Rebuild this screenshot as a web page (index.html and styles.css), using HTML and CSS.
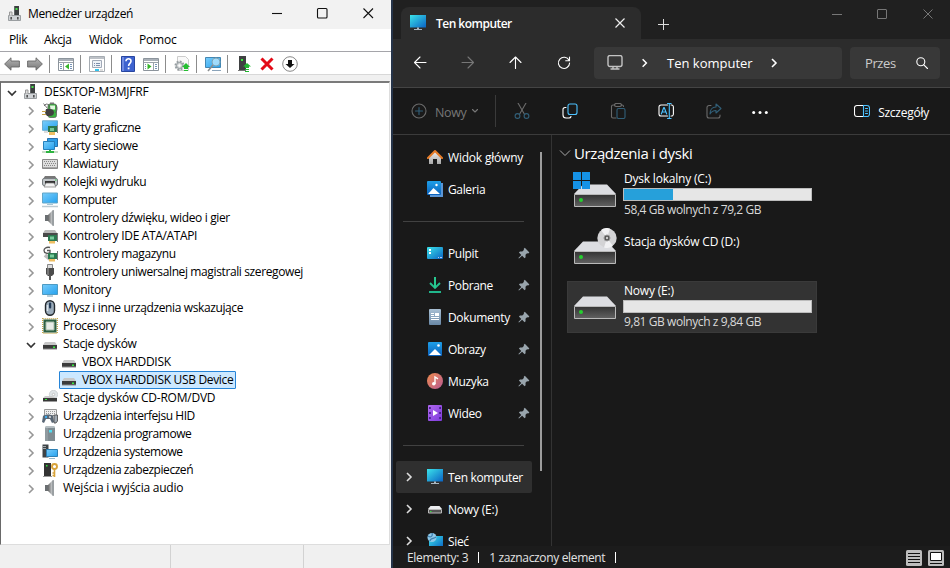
FILE: index.html
```
<!DOCTYPE html>
<html lang="pl">
<head>
<meta charset="utf-8">
<title>Menedżer urządzeń</title>
<link rel="stylesheet" href="styles.css">
</head>
<body>
<svg class="defs" aria-hidden="true">
  <defs>
    <linearGradient id="screen" x1="0" y1="0" x2="1" y2="1"><stop offset="0" stop-color="#3be3ea"/><stop offset="1" stop-color="#0a63c4"/></linearGradient>
    <linearGradient id="mon" x1="0" y1="0" x2="1" y2="1"><stop offset="0" stop-color="#79cdfb"/><stop offset="1" stop-color="#25a1ee"/></linearGradient>
    <linearGradient id="metal" x1="0" y1="0" x2="0" y2="1"><stop offset="0" stop-color="#333"/><stop offset="1" stop-color="#626262"/></linearGradient>
    <linearGradient id="arrow" x1="0" y1="0" x2="0" y2="1"><stop offset="0" stop-color="#b5b5b5"/><stop offset="1" stop-color="#777"/></linearGradient>
    <linearGradient id="speak" x1="0" y1="0" x2="1" y2="0"><stop offset="0" stop-color="#666"/><stop offset="1" stop-color="#c5c8ca"/></linearGradient>
    <linearGradient id="pic" x1="0" y1="0" x2="0" y2="1"><stop offset="0" stop-color="#1e9fe8"/><stop offset="1" stop-color="#0b62bd"/></linearGradient>
    <linearGradient id="music" x1="0" y1="0" x2="1" y2="1"><stop offset="0" stop-color="#ef8b4c"/><stop offset="1" stop-color="#b75a94"/></linearGradient>
    <linearGradient id="house" x1="0" y1="0" x2="0" y2="1"><stop offset="0" stop-color="#f0f0f0"/><stop offset="1" stop-color="#a8a8a8"/></linearGradient>
    <linearGradient id="video" x1="0" y1="0" x2="1" y2="1"><stop offset="0" stop-color="#b068ee"/><stop offset="1" stop-color="#7d3bdc"/></linearGradient>
    <linearGradient id="doc" x1="0" y1="0" x2="0" y2="1"><stop offset="0" stop-color="#a9c0d4"/><stop offset="1" stop-color="#6988a6"/></linearGradient>
  </defs>
  <symbol id="chev" viewBox="0 0 16 16"><path d="M6 4l4 4-4 4" fill="none" stroke="currentColor" stroke-width="1.600"/></symbol>
  <symbol id="chevd" viewBox="0 0 16 16"><path d="M4 6l4 4 4-4" fill="none" stroke="currentColor" stroke-width="1.700"/></symbol>
  <symbol id="devmgr" viewBox="0 0 16 16"><path d="M7 0h5v9H7z" fill="#606465"/><path d="M8 0h4v9H8z" fill="#3c3f40"/><path d="M8.500 2h2v2h-2z" fill="#46e04a"/><path d="M1.500 9.500h12v5h-12z" fill="#cfd2d5" stroke="#9a9ea1"/><path d="M2.500 9.500V6H5v3.500" fill="#ddd" stroke="#999"/><path d="M3.500 11h1.300v2.500H3.500zM10.200 11h1.300v2.500h-1.300z" fill="#333"/></symbol>
  <symbol id="left" viewBox="0 0 16 16"><path d="M.6 8L7 1.800V5h8.400v6H7v3.200z" fill="url(#arrow)" stroke="#666" stroke-width=".9"/></symbol>
  <symbol id="right" viewBox="0 0 16 16"><path d="M15.400 8L9 1.800V5H.600v6H9v3.200z" fill="url(#arrow)" stroke="#666" stroke-width=".9"/></symbol>
  <symbol id="treewin" viewBox="0 0 16 16"><path d="M.5 2.500h15v12H.5z" fill="#fff" stroke="#8c949c"/><path d="M1 3h14v2H1z" fill="#a9b0b8"/><path d="M1 6.500h14" stroke="#9aa2aa"/><path d="M5.500 7v7" stroke="#9aa2aa"/><path d="M2 8.500h2M2 10.500h2M2 12.500h2M12 8.500h2M12 10.500h2M12 12.500h2" stroke="#7794b8"/><path d="M11 7.500v6l-4-3z" fill="#35b52b"/></symbol>
  <symbol id="props" viewBox="0 0 16 16"><path d="M.5.500h15v15H.5z" fill="#fff" stroke="#a6acb2"/><path d="M1 2h14" stroke="#a7adb4" stroke-width="1.500"/><path d="M3.500 4.500h9v7h-9z" fill="#eef2f7" stroke="#a2aab8"/><path d="M5 7.500h1M7 7.500h4M5 9.500h1M7 9.500h4" stroke="#7d8eac"/><path d="M6 14h4" stroke="#2fc5ef" stroke-width="2"/><path d="M11 14h3" stroke="#bbb"/></symbol>
  <symbol id="help" viewBox="0 0 16 16"><path d="M1.500.500h13v15h-13z" fill="#3d62cf" stroke="#2846a0"/><path d="M2 1h2v14H2z" fill="#6f8be2"/><path d="M6 5.300c0-3.500 5.200-3.200 5 0C11 7.400 8.600 7.500 8.600 10" fill="none" stroke="#fff" stroke-width="1.600"/><path d="M7.700 11.500h1.800v1.800H7.700z" fill="#fff"/></symbol>
  <symbol id="actwin" viewBox="0 0 16 16"><path d="M.5 2.500h15v12H.5z" fill="#fff" stroke="#8c949c"/><path d="M1 3h14v2H1z" fill="#a9b0b8"/><path d="M1 6.500h14M10.500 7v7" stroke="#9aa2aa"/><path d="M12 8.500h2M12 10.500h2M12 12.500h2M2 8.500h1M2 10.500h1M2 12.500h1" stroke="#7794b8"/><path d="M4.500 7.500v6l4-3z" fill="#35b52b"/></symbol>
  <symbol id="gear" viewBox="0 0 16 16"><path d="M3.500.500h8l3 3v11h-11z" fill="#f9f9f9" stroke="#ccc"/><circle cx="5.500" cy="9.500" r="4" fill="#ddd" stroke="#959da1" stroke-width="2" stroke-dasharray="1.800 1.300"/><circle cx="5.500" cy="9.500" r="3" fill="#d7dadb" stroke="#959da1"/><circle cx="5.500" cy="9.500" r="1.200" fill="#fff"/><path d="M12 7l4 4h-2v2h-4v-2H8z" fill="#25bf32"/><path d="M10 14.500h4" stroke="#25bf32"/></symbol>
  <symbol id="scan" viewBox="0 0 16 16"><path d="M.5 1.500h15v10H.5z" fill="url(#mon)" stroke="#4487b2"/><circle cx="11" cy="6" r="4" fill="#b7e5fc" fill-opacity=".8" stroke="#7fa3b5"/><path d="M8 9l-5 6" stroke="#8a8e90" stroke-width="1.600"/><path d="M7 14.500h9" stroke="#8ba4ba"/></symbol>
  <symbol id="update" viewBox="0 0 16 16"><path d="M2 0h7v14H2z" fill="#3f4142"/><path d="M1 14h8v1H1z" fill="#777"/><path d="M4 3h2v2H4z" fill="#3aee3f"/><path d="M10 7l4 3.500h-2V12H8v-1.500H6z" fill="#22b832"/><path d="M8 13.500h4M8 15.500h4" stroke="#22b832"/></symbol>
  <symbol id="redx" viewBox="0 0 16 16"><path d="M2.500 2.500l11 11M13.500 2.500l-11 11" stroke="#e30b17" stroke-width="3"/></symbol>
  <symbol id="downc" viewBox="0 0 16 16"><circle cx="8" cy="8" r="7.300" fill="#fff" stroke="#888"/><path d="M6 4h4v4h2.500L8 12 3.500 8H6z" fill="#111"/></symbol>
  <symbol id="battery" viewBox="0 0 16 16"><rect x="6" y="2" width="8.500" height="13.500" rx="2" fill="#39b03e" stroke="#5b665c" stroke-width=".8"/><path d="M8 3.500h5v4H8z" fill="#e1f7df"/><path d="M8 .5h4v1.500H8z" fill="#777"/><path d="M1.500 1.500l4 5M2 4l2-2c3 0 4 2 4 5M14 3c2 3 1 6-1 8" fill="none" stroke="#555" stroke-width=".8"/><path d="M4 7h4c2 0 4 1 4 3.500S10 14 8 14H5l-2-3z" fill="#404040"/><path d="M0 9.500h4M0 12.500h4" stroke="#c5a348"/></symbol>
  <symbol id="gpu" viewBox="0 0 16 16"><path d="M.5.800h15v9.500H.5z" fill="url(#mon)" stroke="#6aacd0"/><path d="M2 12h4" stroke="#bbb"/><path d="M6 6h9v6H6z" fill="#2b7850"/><path d="M8 8h4v3H8z" fill="#74c898"/><path d="M15.500 5v8" stroke="#888"/><path d="M8 12v3M10 12v3M12 12v3" stroke="#e7a320" stroke-width="1.400"/></symbol>
  <symbol id="net" viewBox="0 0 16 16"><path d="M5.500.500h10v8h-10z" fill="#2b9de7" stroke="#2670ac"/><path d="M1.500 3.500h11v8h-11z" fill="url(#mon)" stroke="#2680bc"/><path d="M0 14h16" stroke="#c9ddc9" stroke-width="2"/><path d="M4 14h8M8 12v2" stroke="#2db440" stroke-width="2"/></symbol>
  <symbol id="kbd" viewBox="0 0 16 16"><path d="M.5 3.500h15v9H.5z" fill="#dedede" stroke="#888"/><path d="M2 5.500h12M3 7.500h11M2 9.500h12" stroke="#888" stroke-dasharray="1 1"/><path d="M1 11.700h14" stroke="#999"/></symbol>
  <symbol id="printer" viewBox="0 0 16 16"><path d="M3 2h10l2 3H1z" fill="#777"/><rect x=".5" y="4.500" width="15" height="7" rx="1.500" fill="#bfc4c7" stroke="#787e81"/><path d="M3 7h10v3H3z" fill="#333"/><path d="M4 9h8l2 4H2z" fill="#f2f2f2" stroke="#777" stroke-width=".7"/><path d="M13 5.500h1.500v1H13z" fill="#39cd4c"/></symbol>
  <symbol id="pc" viewBox="0 0 16 16"><path d="M.5 1h15v10H.5z" fill="url(#mon)" stroke="#62a6c8"/><path d="M5 12.500h6" stroke="#a7c4d2"/><path d="M0 14.500h16" stroke="#bccbd2" stroke-width="1.500"/></symbol>
  <symbol id="speaker" viewBox="0 0 16 16"><path d="M3 5h3v6H3z" fill="#6b6f72"/><path d="M6 5l4-4v14l-4-4z" fill="url(#speak)"/><path d="M10 .5l2-.5v16l-2-.5z" fill="#9a9fa2"/></symbol>
  <symbol id="ide" viewBox="0 0 16 16"><path d="M3 2h10l2 3H1z" fill="#b9b9b9"/><path d="M1 5h14v4H1z" fill="#4a4a4a"/><path d="M6 7h9v6H6z" fill="#2b7850"/><path d="M8 8.500h4v3H8z" fill="#77cc9b"/><path d="M15.500 5v9" stroke="#777"/><path d="M8 13v2.500M10 13v2.500M12 13v2.500" stroke="#e7a320" stroke-width="1.400"/></symbol>
  <symbol id="storage" viewBox="0 0 16 16"><path d="M3 9l5 4" stroke="#bbb" stroke-width="4"/><path d="M8 1.500C4 .5 2 3 2 4.500c0 3 4 3.500 6 2V4.500H5" fill="none" stroke="#555" stroke-width="1.300"/><path d="M6 7h9v6H6z" fill="#2b7850"/><path d="M8 8.500h4v3H8z" fill="#77cc9b"/><path d="M15.500 5v9" stroke="#777"/><path d="M8 13v2.500M10 13v2.500M12 13v2.500" stroke="#e7a320" stroke-width="1.400"/></symbol>
  <symbol id="usb" viewBox="0 0 16 16"><path d="M5.500.500h5V5h-5z" fill="#ddd" stroke="#888"/><path d="M4 4h8v6l-2 2H6l-2-2z" fill="#4b4b4b"/><path d="M5 4h2v7H5z" fill="#777"/><path d="M7 11h2v5H7z" fill="#555"/></symbol>
  <symbol id="monitor" viewBox="0 0 16 16"><path d="M.5 2.500h15v10H.5z" fill="url(#mon)" stroke="#4e9bc3"/><path d="M5 14h6" stroke="#9abacb" stroke-width="1.400"/></symbol>
  <symbol id="mouse" viewBox="0 0 16 16"><rect x="3.500" y=".7" width="9" height="14.600" rx="4.500" fill="#9aabba" stroke="#23282d" stroke-width="1.400"/><path d="M5.500 5v6" stroke="#dae4ec" stroke-width="1.500"/><rect x="7" y="2.500" width="2.200" height="6" rx="1" fill="#243c58"/></symbol>
  <symbol id="cpu" viewBox="0 0 16 16"><path d="M.7.700h14.600v14.600H.7z" fill="none" stroke="#c2a54b" stroke-width="1.400" stroke-dasharray="1 1"/><path d="M1.500 1.500h13v13h-13z" fill="#2c6044"/><path d="M4 4h8v8H4z" fill="#e7ece7" stroke="#a5bba9"/></symbol>
  <symbol id="disk" viewBox="0 0 16 16"><path d="M3 6h10l2 3H1z" fill="#c8c8c8"/><path d="M1 9h14v4H1z" fill="#3b3b3b"/><path d="M1 13h14" stroke="#888"/><path d="M11 10.500h2V12h-2z" fill="#36ec3d"/></symbol>
  <symbol id="cdd" viewBox="0 0 16 16"><circle cx="11.500" cy="4.500" r="4.200" fill="#dfe4e7" stroke="#c5cacd" stroke-width=".7"/><circle cx="11.500" cy="4.500" r="1.200" fill="#fff" stroke="#aaa" stroke-width=".6"/><path d="M3 6h7l4 2H1z" fill="#ccc"/><path d="M1 8h14v3.500H1z" fill="#383838"/><path d="M3 9h2v1H3z" fill="#36ec3d"/></symbol>
  <symbol id="hid" viewBox="0 0 16 16"><path d="M2.500 1.500h12v6h-12z" fill="#eee" stroke="#999"/><path d="M4 3.500h9M4 5.500h9" stroke="#999" stroke-dasharray="1 1"/><path d="M1 8c2-2 8-2 10 0l1 6-2 1-2-4H4l-2 4-2-1z" fill="#586675"/><path d="M12 7h3.500v6l-1.500 2h-2z" fill="#a0a9b2" stroke="#444" stroke-width=".8"/><circle cx="4" cy="9" r="1.200" fill="#3facec"/><circle cx="8" cy="9" r="1" fill="#ddd"/></symbol>
  <symbol id="soft" viewBox="0 0 16 16"><path d="M4 0h8l1 2v13H3V2z" fill="#7f8b91"/><path d="M4 0h8l1 2H3z" fill="#b5bec2"/><path d="M3 2h3v13H3z" fill="#8f9a9f"/><path d="M7 4h3v2.500H7z" fill="#52dbf0"/></symbol>
  <symbol id="sys" viewBox="0 0 16 16"><path d="M.5.500h6v13h-6z" fill="#3d4346"/><path d="M1 2.500h3M1 4.500h3" stroke="#a0a7ab"/><path d="M4.500 5.500h11v7h-11z" fill="url(#mon)" stroke="#2e7fb2"/><path d="M7 14.500h6" stroke="#95b7ca"/></symbol>
  <symbol id="sec" viewBox="0 0 16 16"><path d="M2 1h7v13H2z" fill="#333"/><path d="M4 3h1.500v1.500H4z" fill="#2fe83e"/><path d="M1 14.500h9" stroke="#999"/><circle cx="12.500" cy="4.500" r="2.500" fill="none" stroke="#d8a33a" stroke-width="1.900"/><path d="M12.500 7v8M12.500 11h-2M12.500 13.500h-2" stroke="#d8a33a" stroke-width="1.600"/></symbol>

  <symbol id="screenpc" viewBox="0 0 16 16"><path d="M0 0h16v12.500H0z" fill="url(#screen)"/><path d="M7 12.500h2V14h3v1H4v-1h3z" fill="#aab6bf"/></symbol>
  <symbol id="home" viewBox="0 0 16 16"><path d="M2 8l6-6 6 6v7h-4v-5H6v5H2z" fill="url(#house)"/><path d="M1 9l7-7 7 7" fill="none" stroke="#e57b28" stroke-width="2.100" stroke-linecap="round" stroke-linejoin="round"/></symbol>
  <symbol id="gallery" viewBox="0 0 16 16"><path d="M4 2h12v14H3v-3z" fill="#5b96d6"/><rect width="14" height="14" rx="1" fill="url(#pic)"/><path d="M1 13l5.500-6 6.500 6z" fill="#fff"/><circle cx="9.500" cy="4" r="1.200" fill="#fff"/></symbol>
  <symbol id="desktop" viewBox="0 0 16 16"><rect y="2" width="16" height="12" rx="1" fill="url(#screen)"/><path d="M2 4h2v2H2zM2 7h2v2H2z" fill="#fff"/><path d="M11 12.500h1M13 12.500h2" stroke="#bce"/></symbol>
  <symbol id="dl" viewBox="0 0 16 16"><path d="M3 6l5 5 5-5" fill="none" stroke="#24c08d" stroke-width="1.900"/><path d="M7 0h2v11H7z" fill="#27c990"/><path d="M2 14h12v2H2z" fill="#20b68b"/></symbol>
  <symbol id="docs" viewBox="0 0 16 16"><rect x="2" width="12" height="16" rx="1" fill="url(#doc)"/><path d="M4 4.500h3M4 6.500h3M4 8.500h8M4 10.500h8" stroke="#fff"/><path d="M8 4h4v3H8z" fill="#fff"/></symbol>
  <symbol id="images" viewBox="0 0 16 16"><rect x="1" y="1" width="14" height="14" rx="1" fill="url(#pic)"/><path d="M2 14l6-6 6 6z" fill="#fff"/><circle cx="11.500" cy="4.500" r="1.300" fill="#fff"/></symbol>
  <symbol id="musicicon" viewBox="0 0 16 16"><circle cx="8" cy="8" r="8" fill="url(#music)"/><circle cx="6.800" cy="10.800" r="1.800" fill="#fff"/><path d="M8 11V4l3 1.800" fill="none" stroke="#fff" stroke-width="1.400"/></symbol>
  <symbol id="vid" viewBox="0 0 16 16"><rect x="1" width="14" height="16" rx="1" fill="url(#video)"/><path d="M2.900 2v12M13.100 2v12" stroke="#46218a" stroke-width="1.800" stroke-dasharray="2 3"/><path d="M6 5l5 3-5 3z" fill="#fff"/></symbol>
  <symbol id="drive" viewBox="0 0 16 16"><path d="M3.500 5h9L15 8H1z" fill="#eceef0"/><path d="M1.500 8.500h13v3.500h-13z" fill="#555" stroke="#bbb"/><path d="M3 10h1.500v1H3z" fill="#35e03e"/></symbol>
  <symbol id="network" viewBox="0 0 16 16"><path d="M2 3h14v12H2z" fill="url(#screen)"/><circle cx="5" cy="4.500" r="4.500" fill="#8fc8e8"/><path d="M1 3c3 2 5 0 4-3M3 8c0-3 4-2 6-4" fill="none" stroke="#3f81b0" stroke-width="1.300"/></symbol>
  <symbol id="pin" viewBox="0 0 12 12"><path d="M6.800.8l4.600 4.600-1.200 1-1.200-.2-1.500 1.600.1 2.400-1 1.100-2.500-2.500L1 11.600l-.6-.6 2.900-3.100L.9 5.500l1.100-1 2.300.1L5.900 3l-.1-1.200z" fill="#99a5ad"/></symbol>
  <symbol id="bigdrive" viewBox="0 0 44 24"><path d="M10 .5h24l9 9.500H1z" fill="#dcdde1"/><path d="M1.500 10.500h41v12h-41z" fill="url(#metal)" stroke="#b9b9b9"/><circle cx="8" cy="16" r="2" fill="#25cf2f"/></symbol>
</svg>

<div class="desktop">
  <section class="devmgr">
    <header class="title">
      <svg class="i16 ti"><use href="#devmgr"/></svg><span class="name">Menedżer urządzeń</span>
      <svg class="caption" viewBox="0 0 102 12"><g fill="none" stroke="#111" stroke-width="1.100"><path d="M0 6.500h10"/><rect x="45.500" y="1.500" width="9.500" height="9.500" rx="1"/><path d="M91.500 1.500l9.500 9.500M101 1.500L91.500 11"/></g></svg>
    </header>
    <nav class="menu"><span>Plik</span><span>Akcja</span><span>Widok</span><span>Pomoc</span></nav>
    <div class="tools">
      <svg class="i16"><use href="#left"/></svg><svg class="i16 nx"><use href="#right"/></svg><i></i>
      <svg class="i16"><use href="#treewin"/></svg><i></i>
      <svg class="i16"><use href="#props"/></svg><i></i>
      <svg class="i16"><use href="#help"/></svg><svg class="i16 nx"><use href="#actwin"/></svg><i></i>
      <svg class="i16"><use href="#gear"/></svg><i></i>
      <svg class="i16"><use href="#scan"/></svg><i></i>
      <svg class="i16 up"><use href="#update"/></svg><svg class="i16 x"><use href="#redx"/></svg><svg class="i16 dn"><use href="#downc"/></svg>
    </div>
    <div class="tree">
      <div class="row root"><svg class="i16 ch open"><use href="#chevd"/></svg><svg class="i16"><use href="#devmgr"/></svg><span class="caps">DESKTOP-M3MJFRF</span></div>
      <div class="row"><svg class="i16 ch"><use href="#chev"/></svg><svg class="i16"><use href="#battery"/></svg><span>Baterie</span></div>
      <div class="row"><svg class="i16 ch"><use href="#chev"/></svg><svg class="i16"><use href="#gpu"/></svg><span>Karty graficzne</span></div>
      <div class="row"><svg class="i16 ch"><use href="#chev"/></svg><svg class="i16"><use href="#net"/></svg><span>Karty sieciowe</span></div>
      <div class="row"><svg class="i16 ch"><use href="#chev"/></svg><svg class="i16"><use href="#kbd"/></svg><span>Klawiatury</span></div>
      <div class="row"><svg class="i16 ch"><use href="#chev"/></svg><svg class="i16"><use href="#printer"/></svg><span>Kolejki wydruku</span></div>
      <div class="row"><svg class="i16 ch"><use href="#chev"/></svg><svg class="i16"><use href="#pc"/></svg><span>Komputer</span></div>
      <div class="row"><svg class="i16 ch"><use href="#chev"/></svg><svg class="i16"><use href="#speaker"/></svg><span>Kontrolery dźwięku, wideo i gier</span></div>
      <div class="row"><svg class="i16 ch"><use href="#chev"/></svg><svg class="i16"><use href="#ide"/></svg><span>Kontrolery IDE ATA/ATAPI</span></div>
      <div class="row"><svg class="i16 ch"><use href="#chev"/></svg><svg class="i16"><use href="#storage"/></svg><span>Kontrolery magazynu</span></div>
      <div class="row"><svg class="i16 ch"><use href="#chev"/></svg><svg class="i16"><use href="#usb"/></svg><span class="long">Kontrolery uniwersalnej magistrali szeregowej</span></div>
      <div class="row"><svg class="i16 ch"><use href="#chev"/></svg><svg class="i16"><use href="#monitor"/></svg><span>Monitory</span></div>
      <div class="row"><svg class="i16 ch"><use href="#chev"/></svg><svg class="i16"><use href="#mouse"/></svg><span class="long">Mysz i inne urządzenia wskazujące</span></div>
      <div class="row"><svg class="i16 ch"><use href="#chev"/></svg><svg class="i16"><use href="#cpu"/></svg><span>Procesory</span></div>
      <div class="row"><svg class="i16 ch open"><use href="#chevd"/></svg><svg class="i16"><use href="#disk"/></svg><span>Stacje dysków</span></div>
      <div class="row child"><svg class="i16"><use href="#disk"/></svg><span class="caps">VBOX HARDDISK</span></div>
      <div class="row child sel"><svg class="i16"><use href="#disk"/></svg><span class="caps">VBOX HARDDISK USB Device</span></div>
      <div class="row"><svg class="i16 ch"><use href="#chev"/></svg><svg class="i16"><use href="#cdd"/></svg><span class="caps">Stacje dysków CD-ROM/DVD</span></div>
      <div class="row"><svg class="i16 ch"><use href="#chev"/></svg><svg class="i16"><use href="#hid"/></svg><span class="tight">Urządzenia interfejsu HID</span></div>
      <div class="row"><svg class="i16 ch"><use href="#chev"/></svg><svg class="i16"><use href="#soft"/></svg><span class="tight">Urządzenia programowe</span></div>
      <div class="row"><svg class="i16 ch"><use href="#chev"/></svg><svg class="i16"><use href="#sys"/></svg><span class="tight">Urządzenia systemowe</span></div>
      <div class="row"><svg class="i16 ch"><use href="#chev"/></svg><svg class="i16"><use href="#sec"/></svg><span class="tight">Urządzenia zabezpieczeń</span></div>
      <div class="row"><svg class="i16 ch"><use href="#chev"/></svg><svg class="i16"><use href="#speaker"/></svg><span class="caps">Wejścia i wyjścia audio</span></div>
    </div>
    <footer class="status"><i></i><i></i></footer>
  </section>

  <section class="explorer">
    <header class="tabs">
      <div class="tab"><svg class="i16"><use href="#screenpc"/></svg><b>Ten komputer</b><svg class="tx" viewBox="0 0 10 10"><path d="M.5.500l9 9M9.500.500l-9 9" stroke="#eee" stroke-width="1.200"/></svg></div>
      <svg class="plus" viewBox="0 0 12 12"><path d="M6.500 1v11M1 6.500h11" stroke="#ddd"/></svg>
      <svg class="caption dark" viewBox="0 0 102 12"><g fill="none" stroke="#777"><path d="M0 6.500h10"/><rect x="45.500" y="1.500" width="9" height="9" rx=".5"/><path d="M91.500 1.500l9 9M100.500 1.500l-9 9"/></g></svg>
    </header>
    <div class="nav">
      <svg class="i16" viewBox="0 0 16 16"><path d="M14 7.500H2.500M8 2L2.500 7.500 8 13" class="ln"/></svg>
      <svg class="i16 dim" viewBox="0 0 16 16"><path d="M2 7.500h11.500M8 2l5.500 5.500L8 13" class="ln"/></svg>
      <svg class="i16" viewBox="0 0 16 16"><path d="M7.500 13.500V2M2 7.500L7.500 2 13 7.500" class="ln"/></svg>
      <svg class="i16" viewBox="0 0 16 16"><path d="M13 5.300A5.600 5.600 0 1 0 13.600 8M13.500 2v3.800H9.700" class="ln"/></svg>
      <div class="addr"><svg class="i16" viewBox="0 0 16 16"><rect x="1" y=".5" width="14" height="11" rx="2" class="ln soft"/><path d="M6 12v2M10 12v2M4 14h8" class="ln soft"/></svg><svg class="i16 c1"><use href="#chev"/></svg><span>Ten komputer</span><svg class="i16 c2"><use href="#chev"/></svg></div>
      <div class="search"><span>Przes</span><svg viewBox="0 0 12 12"><circle cx="4.800" cy="4.800" r="4" class="ln"/><path d="M7.800 7.800l3.700 3.700" class="ln"/></svg></div>
    </div>
    <div class="cmd">
      <svg class="i16 off" viewBox="0 0 16 16"><circle cx="8" cy="8" r="7" class="ln"/><path d="M8 4.500v7M4.500 8h7" class="ln bl"/></svg>
      <span class="new">Nowy</span><svg class="cd" viewBox="0 0 8 6"><path d="M1.500 1.500L4 4l2.500-2.500" class="ln"/></svg><i></i>
      <svg class="i16 off" viewBox="0 0 16 16"><path d="M4 0l6.300 11M12 0L5.700 11" class="ln"/><circle cx="3.500" cy="13" r="2.400" class="ln bl"/><circle cx="12.500" cy="13" r="2.400" class="ln bl"/></svg>
      <svg class="i16" viewBox="0 0 16 16"><path d="M4 4.500H3A2 2 0 0 0 1 6.500V12a3 3 0 0 0 3 3h3a2 2 0 0 0 2-1.500" class="ln"/><rect x="6" y="1" width="9" height="10.500" rx="2" class="ln bl"/></svg>
      <svg class="i16 off" viewBox="0 0 16 16"><path d="M5 2H3a1.500 1.500 0 0 0-1.500 1.500v10A1.500 1.500 0 0 0 3 15h3M11 2h1a1.500 1.500 0 0 1 1.500 1.500" class="ln"/><rect x="4.500" y=".5" width="7" height="3" rx="1.500" class="ln"/><rect x="7" y="5.500" width="8" height="10" rx="1.500" class="ln bl"/></svg>
      <svg class="i16" viewBox="0 0 16 16"><path d="M9.500 2H3a2 2 0 0 0-2 2v7a2 2 0 0 0 2 2h6.500M13 2a2 2 0 0 1 2.400 2v7a2 2 0 0 1-2.400 2" class="ln"/><path d="M11.300 0v15.500M9.500.5h3.600M9.500 15.500h3.600M3.300 11l2.500-6.500h.4L8.700 11M4.200 9h3.600" class="ln bl"/></svg>
      <svg class="i16 off" viewBox="0 0 16 16"><path d="M5 2.500H3A2 2 0 0 0 1 4.500V13a2 2 0 0 0 2 2h9a2 2 0 0 0 2-2v-1" class="ln"/><path d="M10 1l5 4.500-5 4.500V7.500C7 7.500 5.500 8.500 4 11c0-4 2-7 6-7z" class="ln bl"/></svg>
      <svg class="i16 dots" viewBox="0 0 16 16"><g fill="#fff"><circle cx="1.700" cy="9.500" r="1.500"/><circle cx="8" cy="9.500" r="1.500"/><circle cx="14.300" cy="9.500" r="1.500"/></g></svg>
      <svg class="i16 det" viewBox="0 0 16 16"><path d="M9 2.500H3a2.500 2.500 0 0 0-2.500 2.500v6A2.500 2.500 0 0 0 3 13.500h6" class="ln"/><path d="M9.500 2.500H13A2.500 2.500 0 0 1 15.500 5v6a2.500 2.500 0 0 1-2.500 2.500H9.500zM11.500 5.500h2M11.500 8h2M11.500 10.500h2" class="ln bl"/></svg>
      <span class="dt">Szczegóły</span>
    </div>
    <div class="body">
      <aside>
        <div class="list">
          <div class="it"><svg class="i16"><use href="#home"/></svg><span class="wide">Widok główny</span></div>
          <div class="it"><svg class="i16"><use href="#gallery"/></svg><span>Galeria</span></div>
          <hr>
          <div class="it"><svg class="i16"><use href="#desktop"/></svg><span>Pulpit</span><svg class="pin"><use href="#pin"/></svg></div>
          <div class="it"><svg class="i16"><use href="#dl"/></svg><span>Pobrane</span><svg class="pin"><use href="#pin"/></svg></div>
          <div class="it"><svg class="i16"><use href="#docs"/></svg><span>Dokumenty</span><svg class="pin"><use href="#pin"/></svg></div>
          <div class="it"><svg class="i16"><use href="#images"/></svg><span>Obrazy</span><svg class="pin"><use href="#pin"/></svg></div>
          <div class="it"><svg class="i16"><use href="#musicicon"/></svg><span>Muzyka</span><svg class="pin"><use href="#pin"/></svg></div>
          <div class="it"><svg class="i16"><use href="#vid"/></svg><span>Wideo</span><svg class="pin"><use href="#pin"/></svg></div>
          <hr>
          <div class="it node on"><svg class="i16 ex"><use href="#chev"/></svg><svg class="i16"><use href="#screenpc"/></svg><span>Ten komputer</span></div>
          <div class="it node"><svg class="i16 ex"><use href="#chev"/></svg><svg class="i16"><use href="#drive"/></svg><span class="wide">Nowy (E:)</span></div>
          <div class="it node"><svg class="i16 ex"><use href="#chev"/></svg><svg class="i16"><use href="#network"/></svg><span>Sieć</span></div>
        </div>
        <div class="scroll"></div>
      </aside>
      <main>
        <h2><svg viewBox="0 0 12 8"><path d="M1 1.500l5 5 5-5" fill="none" stroke="#aaa"/></svg>Urządzenia i dyski</h2>
        <div class="drv c">
          <svg class="pic" viewBox="0 0 46 38"><svg x="1" y="12" width="44" height="24"><use href="#bigdrive"/></svg><path d="M1 0h8v8H1zM10 0h8v8h-8zM1 9h8v8H1zM10 9h8v8h-8z" fill="#1592e6"/></svg>
          <div class="info"><span class="wide">Dysk lokalny (C:)</span><div class="bar"><div class="fill"></div></div><span class="sub">58,4 GB wolnych z 79,2 GB</span></div>
        </div>
        <div class="drv d">
          <svg class="pic" viewBox="0 0 46 38"><svg x="1" y="13" width="44" height="24"><use href="#bigdrive"/></svg><circle cx="35" cy="10" r="9.700" fill="#d3d3d5"/><path d="M35 10L29 2a10 10 0 0 1 9-1.500zM35 10l6 8a10 10 0 0 1-9 1.500z" fill="#f1f1f3"/><circle cx="35" cy="10" r="3" fill="#555" stroke="#999"/><circle cx="35" cy="10" r="1.200" fill="#ccc"/></svg>
          <div class="info"><span class="wide">Stacja dysków CD (D:)</span></div>
        </div>
        <div class="drv e">
          <svg class="pic" viewBox="0 0 46 38"><svg x="1" y="14" width="44" height="24"><use href="#bigdrive"/></svg></svg>
          <div class="info"><span class="wide">Nowy (E:)</span><div class="bar"></div><span class="sub">9,81 GB wolnych z 9,84 GB</span></div>
        </div>
      </main>
    </div>
    <footer class="foot"><span>Elementy: 3</span><i></i><span>1 zaznaczony element</span><i></i>
      <svg class="i16 v1" viewBox="0 0 16 16"><rect width="16" height="16" rx="1.500" fill="#bdbdbd"/><path d="M2 3.500h12M2 6.500h12M2 9.500h12M2 12.500h12" stroke="#111"/></svg>
      <svg class="i16 v2" viewBox="0 0 16 16"><rect width="16" height="16" rx="1.500" fill="#bdbdbd"/><path d="M2.500 2.500h11v8h-11z" fill="#fff" stroke="#111"/><path d="M2 13.500h12" stroke="#111"/></svg>
    </footer>
  </section>
</div>
</body>
</html>
```
FILE: styles.css
```
* { box-sizing: border-box; }
body { margin: 0; width: 950px; height: 568px; overflow: hidden; font: 12px/18px "Open Sans", "Noto Sans", sans-serif; letter-spacing: -0.35px; }
.defs { position: absolute; width: 0; height: 0; }
.i16 { width: 16px; height: 16px; flex: none; }
span, b { white-space: nowrap; }
.desktop { display: flex; height: 568px; background: #263449; }

.devmgr { width: 391px; display: flex; flex-direction: column; background: #f0f0f0; color: #000; }
.title { height: 29px; background: #f2f2f2; display: flex; align-items: center; padding: 0 17px 0 7px; }
.title .ti { margin-top: -2px; }
.title .name { margin-left: 5px; margin-top: -1px; letter-spacing: -0.35px; }
.caption { width: 102px; height: 12px; margin-left: auto; margin-top: -3px; }
.menu { height: 22px; background: #fff; display: flex; padding: 2px 0 0 9px; }
.menu span:nth-child(1) { width: 35px; }
.menu span:nth-child(2) { width: 45px; }
.menu span:nth-child(3) { width: 50px; }
.menu span:nth-child(4) { letter-spacing: -0.2px; }
.tools { height: 24px; border-top: 1px solid #a5a5aa; border-bottom: 1px solid #d8d8d8; background: #fff; display: flex; align-items: center; padding: 2px 0 0 4px; }
.tools i { width: 1px; height: 18px; background: #8c8c8c; margin: 0 8px 0 6px; }
.tools .nx { margin-left: 7px; }
.tools .up { margin-left: 1px; }
.tools .x { margin-left: 6px; }
.tools .dn { margin-left: 7px; }
.tree { margin-top: 6px; height: 464px; background: #fff; border: 1px solid #696969; border-top: 2px solid #7a7a7a; border-right-color: #ddd; border-bottom-color: #ddd; width: 390px; }
.row { display: flex; align-items: center; height: 18px; padding-left: 22px; }
.row .ch { color: #979797; margin: 2px 3px 0 0; }
.row .ch.open { color: #333; }
.row span { margin-left: 5px; }
.row .caps { letter-spacing: -0.23px; }
.row .long { letter-spacing: -0.38px; }
.row .tight { letter-spacing: -0.45px; }
.root { padding-left: 3px; }
.row.child { margin-left: 58px; padding-left: 2px; width: max-content; padding-right: 3px; }
.row.child .caps { letter-spacing: -0.32px; }
.row.sel { background: #cce8ff; outline: 1px solid #2584d8; outline-offset: -1px; border-radius: 1px; }
.status { height: 23px; display: flex; }
.status i { width: 171px; border-right: 1px solid #d2d2d2; }
.status i + i { width: 133px; }

.explorer { margin-left: 2px; width: 557px; background: #191919; color: #fff; display: flex; flex-direction: column; }
.ln { fill: none; stroke: currentColor; stroke-width: 1.1; stroke-linecap: round; stroke-linejoin: round; }
.ln.soft { stroke: #c4c4c4; stroke-width: 1.4; }
.bl { stroke: #4cc2ff; }
.tabs { height: 39px; background: #202020; display: flex; align-items: center; padding: 0 16px 0 8px; }
.tab { width: 240px; height: 32px; margin-top: 7px; background: #2c2c2c; border-radius: 8px 8px 0 0; display: flex; align-items: center; padding: 0 16px 0 9px; }
.tab b { margin-left: 10px; margin-top: 2px; font-weight: 600; letter-spacing: -0.52px; }
.tx { width: 10px; height: 10px; margin-left: auto; }
.plus { width: 12px; height: 12px; margin: 8px 0 0 16px; }
.caption.dark { margin-top: -11px; }
.nav { height: 49px; background: #2c2c2c; border-bottom: 1px solid #444; display: flex; align-items: center; padding-left: 19px; gap: 32px; }
.nav .dim { color: #777; }
.addr { width: 248px; height: 32px; margin-left: -10px; background: #383838; border-radius: 4px; display: flex; align-items: center; padding-left: 13px; font-size: 13px; letter-spacing: 0; }
.addr .c1 { margin-left: 14px; width: 15px; }
.addr span { margin-left: 15px; }
.addr .c2 { margin-left: 13px; }
.search { width: 90px; height: 32px; margin-left: -24px; background: #383838; border-radius: 4px; display: flex; align-items: center; padding-left: 15px; color: #ccc; font-size: 13px; letter-spacing: -.4px; }
.search span { width: 31px; }
.search svg { width: 12px; height: 12px; margin-left: 20px; color: #fff; }
.cmd { height: 47px; border-bottom: 1px solid #3b3b3b; display: flex; align-items: center; padding: 0 21px 0 18px; }
.cmd .off { color: #6b6b6b; }
.cmd .off .bl { stroke: #315f78; }
.cmd .new { width: 31px; margin: 3px 0 0 8px; color: #777; font-size: 12.5px; }
.cmd .cd { width: 8px; height: 6px; margin-left: 5px; color: #777; }
.cmd .dt { margin-top: 3px; letter-spacing: -.25px; }
.cmd i { width: 1px; height: 32px; background: #3a3a3a; margin: 0 18px 0 16px; }
.cmd i ~ .i16 { margin-right: 32px; }
.cmd i ~ .dots { margin-left: -2px; }
.cmd i ~ .det { margin-left: auto; margin-right: 8px; }
.body { height: 411px; display: flex; overflow: hidden; }
aside { width: 159px; border-right: 1px solid #333; display: flex; padding-top: 6px; }
.list { width: 139px; padding-left: 3px; }
.it { height: 32px; display: flex; align-items: center; padding-left: 31px; }
.it span { margin-left: 5px; margin-top: 1px; }
.it .wide, .info .wide { letter-spacing: -.2px; }
.it .pin { width: 12px; height: 12px; margin-left: auto; margin-right: 2px; flex: none; }
.list hr { border: 0; height: 1px; background: #414141; margin: 16px 8px 15px 7px; }
.node { padding-left: 5px; }
.node .ex { margin-right: 10px; color: #ddd; }
.node.on { background: #2f2f2f; border-radius: 2px; }
.scroll { width: 2px; height: 319px; margin: 11px 0 0 8px; background: #9d9d9d; }
main { flex: 1; padding: 8px 0 0 15px; }
h2 { margin: 0; height: 20px; font: 400 15px/20px "Open Sans", sans-serif; letter-spacing: -.4px; display: flex; align-items: center; }
h2 svg { width: 12px; height: 8px; margin: 0 3px 0 -8px; }
.drv { width: 250px; height: 52px; display: flex; padding-left: 5px; }
.pic { width: 46px; height: 38px; flex: none; }
.info { margin-left: 5px; display: flex; flex-direction: column; }
.info span { line-height: 17px; padding-left: 1px; }
.bar { width: 189px; height: 13px; margin-top: 1px; background: #e6e6e6; border: 1px solid #bcbcbc; }
.fill { width: 49px; height: 11px; background: #26a0da; }
.info .sub { color: #d9d9d9; letter-spacing: -.42px; }
.c { margin-top: 7px; }
.c .pic { margin-top: 2px; }
.d { margin-top: 5px; }
.d .pic { margin-top: 1px; }
.d .info { margin-top: 6px; }
.e { background: #333; border: 1px solid #3a3a3a; padding-left: 4px; margin-top: 2px; }
.foot { height: 22px; background: #1c1c1c; display: flex; align-items: center; padding: 1px 6px 0 14px; color: #e3e3e3; }
.foot span { letter-spacing: -.35px; padding-top: 1px; }
.foot i { width: 1px; height: 11px; background: #fff; margin: 0 10px; }
.v1 { margin-left: auto; }
.v2 { margin-left: 6px; }
```
